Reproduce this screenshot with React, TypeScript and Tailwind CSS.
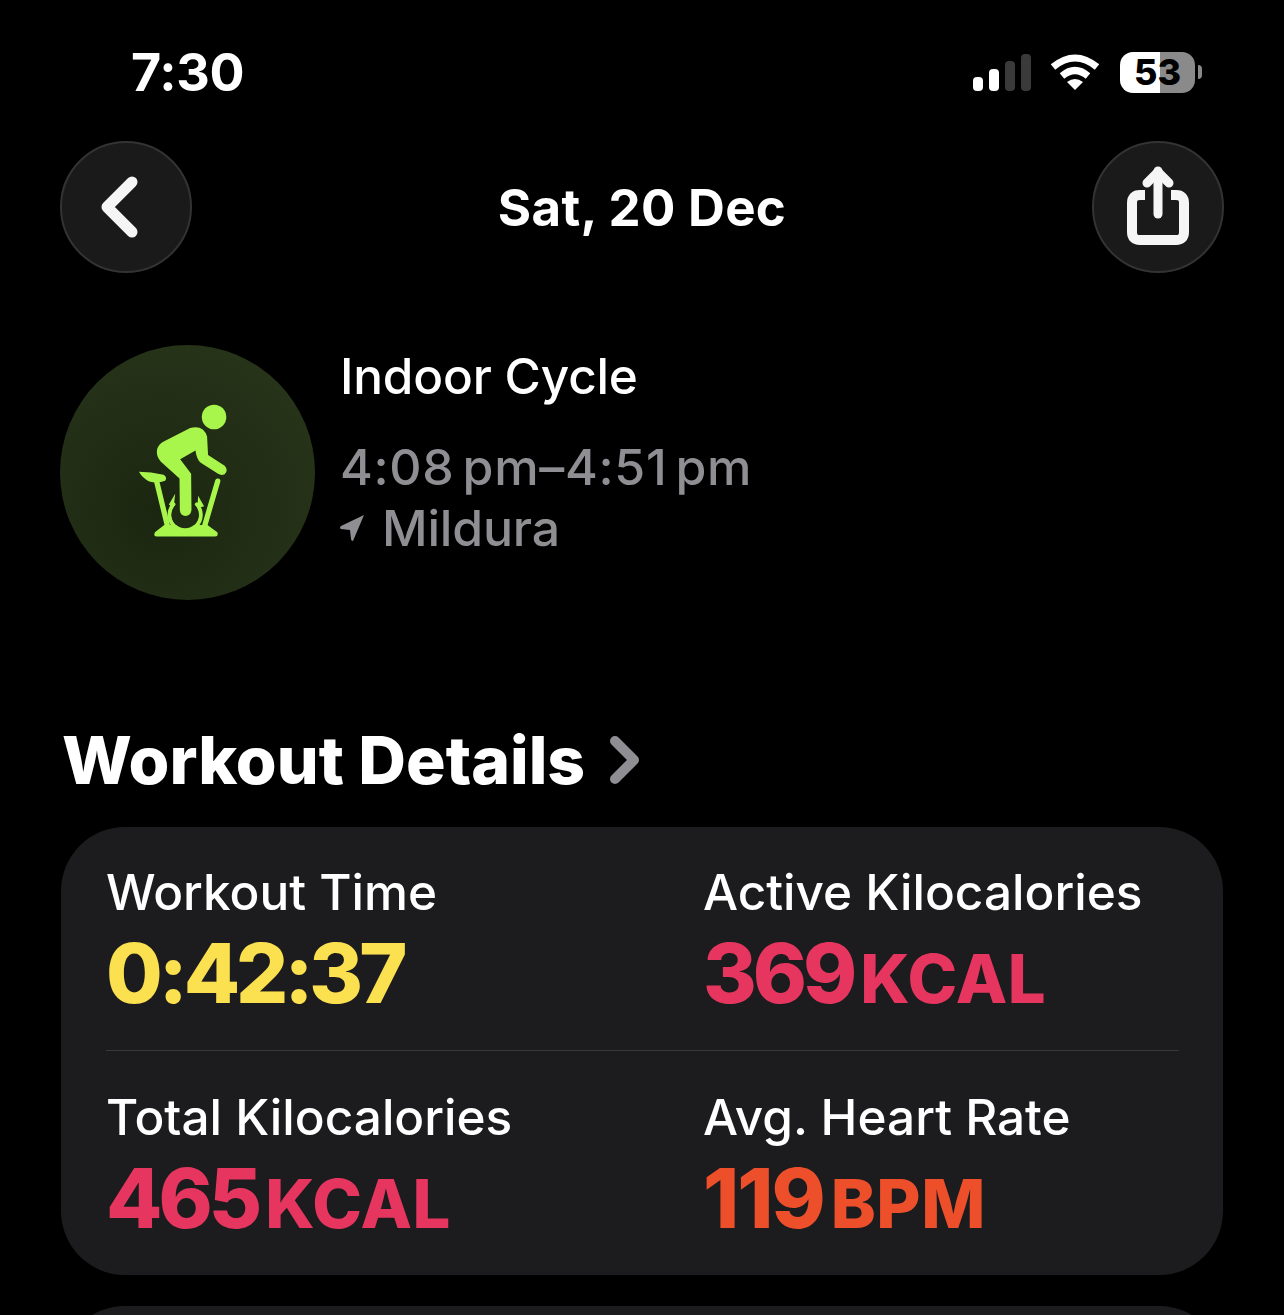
const font = "font-['Inter',sans-serif]";

const BikeIcon = () => (
  <svg viewBox="285 215 280 410" className="h-[137px] w-[93px]" fill="#a8f64c">
    <circle cx="520" cy="259" r="37" />
    <path d="M294 424 Q330 424 368 433 Q380 440 373 451 Q350 459 325 453 Q304 443 294 424 Z" />
    <path d="M370 584 L500 584 L530 606 Q534 619 522 619 L348 619 Q336 619 342 606 Z" />
    <path d="M403 490 L384 522 L398 534 Z" />
    <path d="M472 496 L490 528 L470 534 Z" />
    <g fill="none" stroke="#a8f64c" strokeLinecap="round">
      <path d="M347 452 L381 592" strokeWidth="16" />
      <path d="M531 452 L490 592" strokeWidth="16" />
      <path d="M398 522 A47 47 0 1 0 468 522" strokeWidth="12" />
    </g>
    <circle cx="433" cy="553" r="41" fill="#1f2b13" />
    <path d="M348 360 Q350 342 370 332 L448 292 Q488 282 499 318 L502 373 L552 406 Q564 420 552 431 Q542 436 532 430 L480 397 Q468 388 464 360 L418 386 L451 430 L452 540 Q449 557 434 557 Q419 557 417 540 L416 444 L360 394 Q346 378 348 360 Z" />
  </svg>
);

const ShareIcon = () => (
  <svg viewBox="0 0 62 80" className="h-[80px] w-[62px]" fill="none" stroke="#f5f5f5" strokeLinecap="round" strokeLinejoin="round">
    <path d="M18 29 H13 Q5 29 5 37 V66 Q5 74 13 74 H49 Q57 74 57 66 V37 Q57 29 49 29 H44" strokeWidth="10" strokeLinecap="butt" />
    <path d="M31 5 V48" strokeWidth="9" />
    <path d="M20 17 L31 6 L42 17" strokeWidth="9" />
  </svg>
);

const BackIcon = () => (
  <svg viewBox="0 0 40 62" className="h-[62px] w-[40px]" fill="none" stroke="#f5f5f5" strokeWidth="11" strokeLinecap="round" strokeLinejoin="round">
    <path d="M32 6 L7 31 L32 56" />
  </svg>
);

const DetailChevron = () => (
  <svg viewBox="0 0 32 48" className="ml-[24px] h-[48px] w-[32px]" fill="none" stroke="#8e8e93" strokeWidth="10" strokeLinecap="round" strokeLinejoin="round">
    <path d="M6 5 L25 24 L6 43" />
  </svg>
);

const WifiIcon = () => (
  <svg viewBox="0 0 50 36" className="h-[36px] w-[50px]" fill="none" stroke="#fff" strokeWidth="7">
    <path d="M3 13 Q25 -5 47 13" />
    <path d="M12 22 Q25 11 38 22" />
    <path d="M25 36 L17 28 Q25 22 33 28 Z" fill="#fff" stroke="none" />
  </svg>
);

const LocationIcon = () => (
  <svg viewBox="0 0 24 26" className="h-[26px] w-[24px]" fill="#8e8e93">
    <path d="M24 0 L13 26 Q11 26 11 24 L10 15 L1 14 Q-1 13 1 11 Z" />
  </svg>
);

const stats = [
  [
    { label: "Workout Time", value: "0:42:37", unit: "", color: "text-[#fbe14f]", valueClass: "tracking-[-4px]", unitClass: "" },
    { label: "Active Kilocalories", value: "369", unit: "KCAL", color: "text-[#e6365f]", valueClass: "tracking-[-4px]", unitClass: "text-[67px]" },
  ],
  [
    { label: "Total Kilocalories", value: "465", unit: "KCAL", color: "text-[#e6365f]", valueClass: "tracking-[-4px]", unitClass: "text-[67px]" },
    { label: "Avg. Heart Rate", value: "119", unit: "BPM", color: "text-[#ee4f2b]", valueClass: "tracking-[-2px]", unitClass: "text-[68px]" },
  ],
];

export default function App() {
  return (
    <div className={`${font} h-[1315px] w-[1284px] overflow-hidden bg-black text-white`}>
      {/* Status bar */}
      <div className="flex h-[142px] items-center justify-between pl-[131px] pr-[82px] pt-[2px]">
        <span className="mt-[2px] text-[52px] font-bold leading-none tracking-[-0.3px]">7:30</span>
        <div className="flex items-center">
          <div className="flex items-end gap-[6px] self-center">
            <div className="h-[14px] w-[10px] rounded-[4px] bg-white" />
            <div className="h-[22px] w-[10px] rounded-[4px] bg-white" />
            <div className="h-[30px] w-[10px] rounded-[4px] bg-[#3a3a3a]" />
            <div className="h-[37px] w-[10px] rounded-[4px] bg-[#3a3a3a]" />
          </div>
          <div className="ml-[19px]">
            <WifiIcon />
          </div>
          <div className="ml-[20px] flex h-[41px] w-[75px] items-center justify-center rounded-[13px] bg-[linear-gradient(90deg,#fff_53%,#8a8a8a_53%)] text-[36px] font-extrabold leading-none text-black">
            53
          </div>
          <div className="ml-[3px] h-[14px] w-[4px] rounded-r-full bg-[#8a8a8a]" />
        </div>
      </div>

      {/* Nav */}
      <div className="flex h-[130px] items-center justify-between px-[60px]">
        <button className="flex h-[132px] w-[132px] shrink-0 items-center justify-center rounded-full border-2 border-[#333333] bg-[#1a1a1a] pr-[12px]">
          <BackIcon />
        </button>
        <h1 className="text-[51px] font-bold leading-none tracking-[0.3px]">Sat, 20 Dec</h1>
        <button className="flex h-[132px] w-[132px] shrink-0 items-center justify-center rounded-full border-2 border-[#333333] bg-[#1a1a1a] pb-[3px]">
          <ShareIcon />
        </button>
      </div>

      {/* Workout summary */}
      <div className="mt-[73px] flex pl-[60px]">
        <div className="flex h-[255px] w-[255px] items-center justify-center rounded-full bg-[radial-gradient(circle_at_40%_65%,#1b2610_0%,#2a381c_100%)] pb-[5px] pr-[11px]">
          <BikeIcon />
        </div>
        <div className="ml-[25px] flex flex-col pt-[1px]">
          <div className="text-[49.5px] font-medium leading-[60px] tracking-[-0.2px]">Indoor Cycle</div>
          <div className="mt-[31px] text-[50px] font-medium leading-[60px] tracking-[0.7px] text-[#8e8e93] [word-spacing:-6px]">4:08 pm–4:51 pm</div>
          <div className="mt-px flex items-center text-[50px] font-medium leading-[60px] tracking-[-0.2px] text-[#8e8e93]">
            <LocationIcon />
            <span className="ml-[18px]">Mildura</span>
          </div>
        </div>
      </div>

      {/* Workout details */}
      <div className="mt-[125px] flex h-[70px] items-center pl-[62px]">
        <h2 className="text-[66px] font-extrabold leading-[70px]">Workout Details</h2>
        <DetailChevron />
      </div>

      <div className="mx-[61px] mt-[32px] h-[448px] rounded-[64px] bg-[#1c1c1e] pl-[45px] pr-[44px]">
        {stats.map((row, i) => (
          <div
            key={i}
            className={i === 0 ? "grid h-[224px] grid-cols-[597px_1fr] border-b border-[#38383a] pt-[40px]" : "grid h-[224px] grid-cols-[597px_1fr] pt-[41px]"}
          >
            {row.map((s) => (
              <div key={s.label}>
                <div className="text-[49.5px] font-medium leading-[50px]">{s.label}</div>
                <div className={`mt-[12px] flex items-baseline font-extrabold leading-[90px] ${s.color}`}>
                  <span className={`text-[82px] ${s.valueClass}`}>{s.value}</span>
                  {s.unit && <span className={`ml-[7px] tracking-[0.5px] ${s.unitClass}`}>{s.unit}</span>}
                </div>
              </div>
            ))}
          </div>
        ))}
      </div>

      <div className="mx-[61px] mt-[31px] h-[200px] rounded-[64px] bg-[#1c1c1e]" />
    </div>
  );
}
